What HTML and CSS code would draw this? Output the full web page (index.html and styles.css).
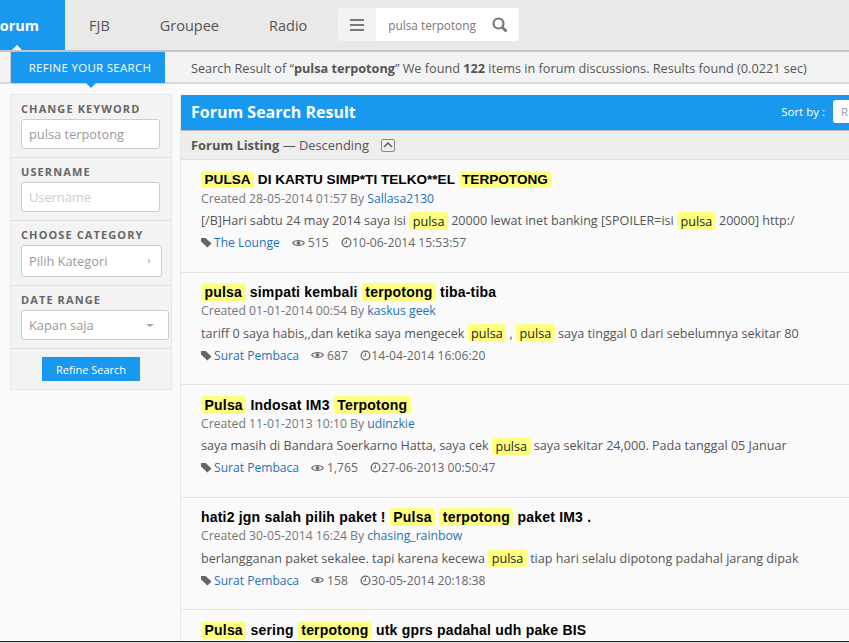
FILE: index.html
```html
<!DOCTYPE html>
<html lang="en">
<head>
    <meta charset="UTF-8">
    <title>Forum Search Result</title>
    <link rel="stylesheet" href="styles.css">
</head>
<body>
    <div class="navbar">
        <a class="nav-item active">Forum</a>
        <a class="nav-item first">FJB</a>
        <a class="nav-item">Groupee</a>
        <a class="nav-item">Radio</a>
        <div class="nav-search">
            <div class="nav-menu">
                <svg width="14" height="12" viewBox="0 0 14 12"><path d="M0 0h14v2H0zM0 5h14v2H0zM0 10h14v2H0z" fill="#777"/></svg>
            </div>
            <div class="nav-query">
                <span>pulsa terpotong</span>
                <svg width="16" height="16" viewBox="0 0 16 16"><circle cx="6.500" cy="6.500" r="5" fill="none" stroke="#777" stroke-width="2.200"/><path d="M10 10l4.500 4.500" stroke="#777" stroke-width="2.800"/></svg>
            </div>
        </div>
    </div>

    <div class="topbar">
        <div class="refine-tab">REFINE YOUR SEARCH</div>
        <div class="summary">Search Result of “<b>pulsa terpotong</b>” We found <b>122</b> items in forum discussions. Results found (0.0221 sec)</div>
    </div>

    <div class="content">
        <div class="sidebar">
            <div class="side-group">
                <label>CHANGE KEYWORD</label>
                <div class="field">pulsa terpotong</div>
            </div>
            <div class="side-group">
                <label>USERNAME</label>
                <div class="field placeholder">Username</div>
            </div>
            <div class="side-group">
                <label>CHOOSE CATEGORY</label>
                <div class="field select wide-1">Pilih Kategori <i class="arrow-right"></i></div>
            </div>
            <div class="side-group">
                <label>DATE RANGE</label>
                <div class="field select wide-2">Kapan saja <i class="arrow-down"></i></div>
            </div>
            <div class="side-action">
                <button class="refine-btn">Refine Search</button>
            </div>
        </div>

        <div class="results">
            <div class="results-head">
                <h2>Forum Search Result</h2>
                <div class="sort">Sort by : <span class="sort-box">R</span></div>
            </div>
            <div class="listing-bar">
                <span><b>Forum Listing</b> — Descending</span>
                <span class="collapse"><svg width="10" height="6" viewBox="0 0 10 6"><path d="M1 5l4-4 4 4" fill="none" stroke="#666" stroke-width="1.600"/></svg></span>
            </div>

            <div class="item">
                <h3 class="caps"><mark>PULSA</mark> DI KARTU SIMP*TI TELKO**EL <mark>TERPOTONG</mark></h3>
                <div class="meta">Created 28-05-2014 01:57 By <a>Sallasa2130</a></div>
                <p>[/B]Hari sabtu 24 may 2014 saya isi <mark>pulsa</mark> 20000 lewat inet banking [SPOILER=isi <mark>pulsa</mark> 20000] http:/</p>
                <div class="stats">
                    <span class="cat"><svg class="ico-tag" viewBox="0 0 12 12"><path d="M0 1h5l6.500 6-4.500 4.500L0 5z" fill="#666"/></svg><a>The Lounge</a></span>
                    <span class="views"><svg class="ico-eye" viewBox="0 0 14 10"><path d="M0.700 5C3 1.500 11 1.500 13.300 5 11 8.500 3 8.500 0.700 5z" fill="none" stroke="#666" stroke-width="1.200"/><circle cx="7" cy="5" r="2" fill="#666"/></svg>515</span>
                    <span class="date"><svg class="ico-clock" viewBox="0 0 12 12"><circle cx="6" cy="6" r="4.800" fill="none" stroke="#666" stroke-width="1.400"/><path d="M6 3v3.500H3.500" fill="none" stroke="#666"/></svg>10-06-2014 15:53:57</span>
                </div>
            </div>

            <div class="item">
                <h3><mark>pulsa</mark> simpati kembali <mark>terpotong</mark> tiba-tiba</h3>
                <div class="meta">Created 01-01-2014 00:54 By <a>kaskus geek</a></div>
                <p>tariff 0 saya habis,,dan ketika saya mengecek <mark>pulsa</mark> , <mark>pulsa</mark> saya tinggal 0 dari sebelumnya sekitar 80</p>
                <div class="stats">
                    <span class="cat"><svg class="ico-tag" viewBox="0 0 12 12"><path d="M0 1h5l6.500 6-4.500 4.500L0 5z" fill="#666"/></svg><a>Surat Pembaca</a></span>
                    <span class="views"><svg class="ico-eye" viewBox="0 0 14 10"><path d="M0.700 5C3 1.500 11 1.500 13.300 5 11 8.500 3 8.500 0.700 5z" fill="none" stroke="#666" stroke-width="1.200"/><circle cx="7" cy="5" r="2" fill="#666"/></svg>687</span>
                    <span class="date"><svg class="ico-clock" viewBox="0 0 12 12"><circle cx="6" cy="6" r="4.800" fill="none" stroke="#666" stroke-width="1.400"/><path d="M6 3v3.500H3.500" fill="none" stroke="#666"/></svg>14-04-2014 16:06:20</span>
                </div>
            </div>

            <div class="item">
                <h3><mark>Pulsa</mark> Indosat IM3 <mark>Terpotong</mark></h3>
                <div class="meta">Created 11-01-2013 10:10 By <a>udinzkie</a></div>
                <p>saya masih di Bandara Soerkarno Hatta, saya cek <mark>pulsa</mark> saya sekitar 24,000. Pada tanggal 05 Januar</p>
                <div class="stats">
                    <span class="cat"><svg class="ico-tag" viewBox="0 0 12 12"><path d="M0 1h5l6.500 6-4.500 4.500L0 5z" fill="#666"/></svg><a>Surat Pembaca</a></span>
                    <span class="views"><svg class="ico-eye" viewBox="0 0 14 10"><path d="M0.700 5C3 1.500 11 1.500 13.300 5 11 8.500 3 8.500 0.700 5z" fill="none" stroke="#666" stroke-width="1.200"/><circle cx="7" cy="5" r="2" fill="#666"/></svg>1,765</span>
                    <span class="date"><svg class="ico-clock" viewBox="0 0 12 12"><circle cx="6" cy="6" r="4.800" fill="none" stroke="#666" stroke-width="1.400"/><path d="M6 3v3.500H3.500" fill="none" stroke="#666"/></svg>27-06-2013 00:50:47</span>
                </div>
            </div>

            <div class="item">
                <h3>hati2 jgn salah pilih paket ! <mark>Pulsa</mark> <mark>terpotong</mark> paket IM3 .</h3>
                <div class="meta">Created 30-05-2014 16:24 By <a>chasing_rainbow</a></div>
                <p>berlangganan paket sekalee. tapi karena kecewa <mark>pulsa</mark> tiap hari selalu dipotong padahal jarang dipak</p>
                <div class="stats">
                    <span class="cat"><svg class="ico-tag" viewBox="0 0 12 12"><path d="M0 1h5l6.500 6-4.500 4.500L0 5z" fill="#666"/></svg><a>Surat Pembaca</a></span>
                    <span class="views"><svg class="ico-eye" viewBox="0 0 14 10"><path d="M0.700 5C3 1.500 11 1.500 13.300 5 11 8.500 3 8.500 0.700 5z" fill="none" stroke="#666" stroke-width="1.200"/><circle cx="7" cy="5" r="2" fill="#666"/></svg>158</span>
                    <span class="date"><svg class="ico-clock" viewBox="0 0 12 12"><circle cx="6" cy="6" r="4.800" fill="none" stroke="#666" stroke-width="1.400"/><path d="M6 3v3.500H3.500" fill="none" stroke="#666"/></svg>30-05-2014 20:18:38</span>
                </div>
            </div>

            <div class="item">
                <h3><mark>Pulsa</mark> sering <mark>terpotong</mark> utk gprs padahal udh pake BIS</h3>
            </div>
        </div>
    </div>

    <div class="window-edge"></div>
</body>
</html>
```

FILE: styles.css
```css
* {
    margin: 0;
    padding: 0;
    box-sizing: border-box;
}

html, body {
    height: 643px;
    overflow: hidden;
}

body {
    position: relative;
    font-family: 'Open Sans', sans-serif;
    font-size: 12px;
    color: #555;
    background: #fafafa;
}

.navbar {
    display: flex;
    height: 52px;
    background: #e9e9e9;
    border-bottom: 2px solid #c4c4c4;
    font-size: 14.500px;
}

.nav-item {
    display: flex;
    align-items: center;
    height: 50px;
    padding: 0 25px;
    color: #555;
}

.nav-item.first {
    margin-left: -1px;
}

.nav-item.active {
    position: relative;
    flex: none;
    width: 65px;
    justify-content: flex-end;
    padding: 0 26px 0 0;
    background: #1898ee;
    color: #fff;
    font-weight: 700;
}

.nav-item.active::after {
    content: "";
    position: absolute;
    left: 12px;
    bottom: 0;
    border-left: 5px solid transparent;
    border-right: 5px solid transparent;
    border-bottom: 5px solid #fff;
}

.nav-search {
    display: flex;
    height: 33px;
    margin: 8px 0 0 6px;
    border-radius: 3px;
    background: #f3f3f3;
    overflow: hidden;
}

.nav-menu {
    display: flex;
    align-items: center;
    justify-content: center;
    width: 38px;
}

.nav-query {
    display: flex;
    align-items: center;
    justify-content: space-between;
    width: 143px;
    padding: 0 11px 0 12px;
    background: #fff;
    color: #777;
    font-size: 11.800px;
}

.topbar {
    display: flex;
    height: 32px;
    padding-left: 10px;
    background: #f3f3f3;
    border-bottom: 2px solid #d6d6d6;
}

.refine-tab {
    position: relative;
    display: flex;
    align-items: center;
    justify-content: center;
    width: 155px;
    height: 31px;
    padding-left: 4px;
    background: #1898ee;
    border-left: 1px solid #ccc;
    color: #fff;
    font-size: 11.500px;
    letter-spacing: 0.300px;
}

.refine-tab::after {
    content: "";
    position: absolute;
    left: 75px;
    bottom: -5px;
    border-left: 5px solid transparent;
    border-right: 5px solid transparent;
    border-top: 5px solid #1898ee;
}

.summary {
    padding: 7px 0 0 26px;
    font-size: 12.700px;
    white-space: nowrap;
}

.content {
    display: flex;
    align-items: flex-start;
    padding: 10px 0 0 10px;
    gap: 8px;
}

.sidebar {
    flex: none;
    width: 162px;
    background: #f3f3f3;
    border: 1px solid #e6e6e6;
}

.side-group {
    padding: 6px 10px 8px;
    border-bottom: 1px solid #dedede;
}

.side-group label {
    display: block;
    height: 15px;
    margin-bottom: 3px;
    color: #666;
    font-size: 11px;
    font-weight: 700;
    line-height: 15px;
    letter-spacing: 1.100px;
    white-space: nowrap;
}

.field {
    display: flex;
    align-items: center;
    justify-content: space-between;
    width: 139px;
    height: 30px;
    padding: 0 7px;
    background: #fff;
    border: 1px solid #ccc;
    border-radius: 3px;
    color: #999;
    font-size: 12.800px;
}

.placeholder {
    color: #ccc;
}

.wide-1 {
    width: 141px;
    height: 32px;
}

.wide-2 {
    width: 148px;
}

.arrow-right {
    border-top: 3px solid transparent;
    border-bottom: 3px solid transparent;
    border-left: 3px solid #ccc;
    margin-right: 3px;
}

.arrow-down {
    border-left: 4px solid transparent;
    border-right: 4px solid transparent;
    border-top: 3px solid #aaa;
    margin-right: 7px;
}

.side-action {
    display: flex;
    justify-content: center;
    padding: 8px 0;
}

.refine-btn {
    width: 98px;
    height: 24px;
    border: none;
    background: #1898ee;
    color: #fff;
    font-family: inherit;
    font-size: 11px;
}

.results {
    flex: none;
    width: 700px;
    margin-top: 1px;
    border-left: 1px solid #e6e6e6;
}

.results-head {
    display: flex;
    align-items: center;
    justify-content: space-between;
    height: 36px;
    padding: 0 0 2px 10px;
    background: #1898ee;
    border-bottom: 1px solid #bbb;
    color: #fff;
}

.results-head h2 {
    font-size: 16px;
    font-weight: 700;
}

.sort {
    display: flex;
    align-items: center;
    gap: 8px;
    margin-right: 7px;
    font-size: 11.500px;
}

.sort-box {
    display: block;
    width: 40px;
    height: 23px;
    padding: 4px 8px;
    background: #fff;
    border-radius: 3px;
    color: #999;
}

.listing-bar {
    display: flex;
    align-items: center;
    gap: 12px;
    height: 29px;
    padding-left: 10px;
    background: #ededed;
    border-bottom: 1px solid #ddd;
    font-size: 12.900px;
}

.collapse {
    display: flex;
    align-items: center;
    justify-content: center;
    width: 14px;
    height: 13px;
    border: 1px solid #888;
    border-radius: 2px;
}

.item {
    height: 112.500px;
    padding: 9.500px 20px 0;
    border-bottom: 1px solid #e2e2e2;
    white-space: nowrap;
}

.item h3 {
    height: 20px;
    font-family: 'Liberation Sans', sans-serif;
    font-size: 14px;
    font-weight: 700;
    line-height: 20px;
    letter-spacing: 0.200px;
    color: #000;
}

.item h3.caps {
    font-size: 13.600px;
    letter-spacing: 0;
}

mark {
    padding: 1px 3.500px;
    background: #ffff80;
    border-radius: 3px;
    color: inherit;
}

.item p mark {
    padding: 0.500px 3.500px;
    color: #222;
}

.meta {
    height: 18px;
    line-height: 18px;
    color: #777;
    font-size: 12.200px;
}

a {
    color: #1f72b8;
}

.item p {
    height: 20px;
    margin-top: 3.500px;
    line-height: 20px;
    color: #555;
    font-size: 12.600px;
}

.stats {
    display: flex;
    align-items: center;
    height: 18px;
    margin-top: 2.750px;
    color: #666;
    font-size: 12.100px;
}

.stats svg {
    flex: none;
}

.ico-tag {
    width: 11px;
    height: 11px;
    margin-right: 2px;
}

.ico-eye {
    width: 13px;
    height: 10px;
    margin-right: 3px;
}

.ico-clock {
    width: 11px;
    height: 11px;
}

.cat {
    display: flex;
    align-items: center;
    margin-right: 12px;
}

.views {
    display: flex;
    align-items: center;
    margin-right: 12.500px;
}

.date {
    display: flex;
    align-items: center;
}

.window-edge {
    position: absolute;
    left: 0;
    right: 0;
    bottom: 0;
    height: 2px;
    background: #d8d8d8;
    border-top: 1px solid #222;
}
```
